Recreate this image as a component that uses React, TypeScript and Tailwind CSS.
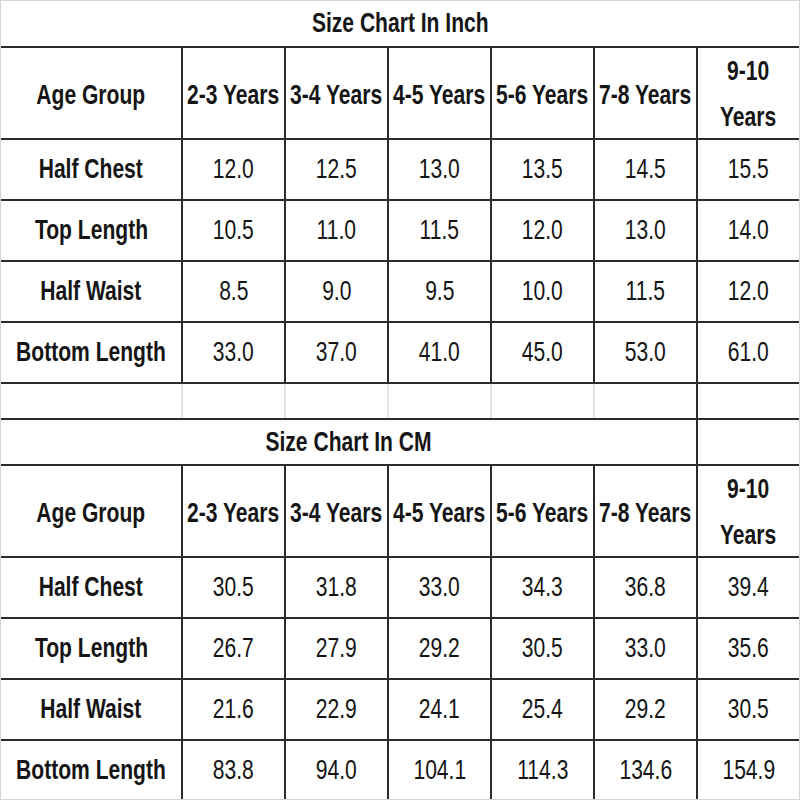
const ages = ['2-3 Years', '3-4 Years', '4-5 Years', '5-6 Years', '7-8 Years'];

const inchRows = [
  { label: 'Half Chest', values: ['12.0', '12.5', '13.0', '13.5', '14.5', '15.5'] },
  { label: 'Top Length', values: ['10.5', '11.0', '11.5', '12.0', '13.0', '14.0'] },
  { label: 'Half Waist', values: ['8.5', '9.0', '9.5', '10.0', '11.5', '12.0'] },
  { label: 'Bottom Length', values: ['33.0', '37.0', '41.0', '45.0', '53.0', '61.0'] },
];

const cmRows = [
  { label: 'Half Chest', values: ['30.5', '31.8', '33.0', '34.3', '36.8', '39.4'] },
  { label: 'Top Length', values: ['26.7', '27.9', '29.2', '30.5', '33.0', '35.6'] },
  { label: 'Half Waist', values: ['21.6', '22.9', '24.1', '25.4', '29.2', '30.5'] },
  { label: 'Bottom Length', values: ['83.8', '94.0', '104.1', '114.3', '134.6', '154.9'] },
];

const cols = 'grid grid-cols-[182px_103px_103px_103px_103px_103px_1fr]';

// narrow text, the chart uses a condensed face
function T({ children }: { children: React.ReactNode }) {
  return <span className="inline-block shrink-0 origin-center scale-x-[0.78] whitespace-nowrap">{children}</span>;
}

function HeaderRow() {
  return (
    <div className={`${cols} h-[92px] shrink-0 border-b-2 border-[#2b2b2b]`}>
      <div className="flex items-center justify-center border-r-2 border-[#2b2b2b] pt-0.5 font-bold">
        <T>Age Group</T>
      </div>
      {ages.map((a) => (
        <div
          key={a}
          className="flex items-center justify-center border-r-2 border-[#2b2b2b] pt-0.5 font-bold"
        >
          <T>{a}</T>
        </div>
      ))}
      <div className="flex flex-col items-center justify-center font-bold leading-[46px]">
        <T>9-10</T>
        <T>Years</T>
      </div>
    </div>
  );
}

function DataRow({
  label,
  values,
  last,
}: {
  label: string;
  values: string[];
  last?: boolean;
}) {
  return (
    <div
      className={`${cols} ${last ? 'flex-1' : 'h-[61px] shrink-0 border-b-2 border-[#2b2b2b]'}`}
    >
      <div className="flex items-center justify-center border-r-2 border-[#2b2b2b] font-bold">
        <T>{label}</T>
      </div>
      {values.map((v, i) => (
        <div
          key={i}
          className={`flex items-center justify-center ${i < 5 ? 'border-r-2 border-[#2b2b2b]' : ''}`}
        >
          <T>{v}</T>
        </div>
      ))}
    </div>
  );
}

export default function App() {
  return (
    <div className="flex h-[800px] w-[800px] flex-col border border-[#d4d4d4] bg-white font-['Liberation_Sans',Arial,sans-serif] text-[27px] text-[#151515]">
      {/* inch */}
      <div className="flex h-[47px] shrink-0 items-center justify-center border-b-2 border-[#2b2b2b] font-bold">
        <T>Size Chart In Inch</T>
      </div>
      <HeaderRow />
      {inchRows.map((r) => (
        <DataRow key={r.label} label={r.label} values={r.values} />
      ))}

      {/* spacer row */}
      <div className={`${cols} h-[36px] shrink-0 border-b-2 border-[#2b2b2b]`}>
        <div className="border-r-2 border-[#e6e6e6]" />
        <div className="border-r-2 border-[#e6e6e6]" />
        <div className="border-r-2 border-[#e6e6e6]" />
        <div className="border-r-2 border-[#e6e6e6]" />
        <div className="border-r-2 border-[#e6e6e6]" />
        <div className="border-r-2 border-[#2b2b2b]" />
        <div />
      </div>

      {/* cm */}
      <div className={`${cols} h-[46px] shrink-0 border-b-2 border-[#2b2b2b]`}>
        <div className="col-span-6 flex items-center justify-center border-r-2 border-[#2b2b2b] font-bold">
          <T>Size Chart In CM</T>
        </div>
        <div />
      </div>
      <HeaderRow />
      {cmRows.map((r, i) => (
        <DataRow key={r.label} label={r.label} values={r.values} last={i === cmRows.length - 1} />
      ))}
    </div>
  );
}
